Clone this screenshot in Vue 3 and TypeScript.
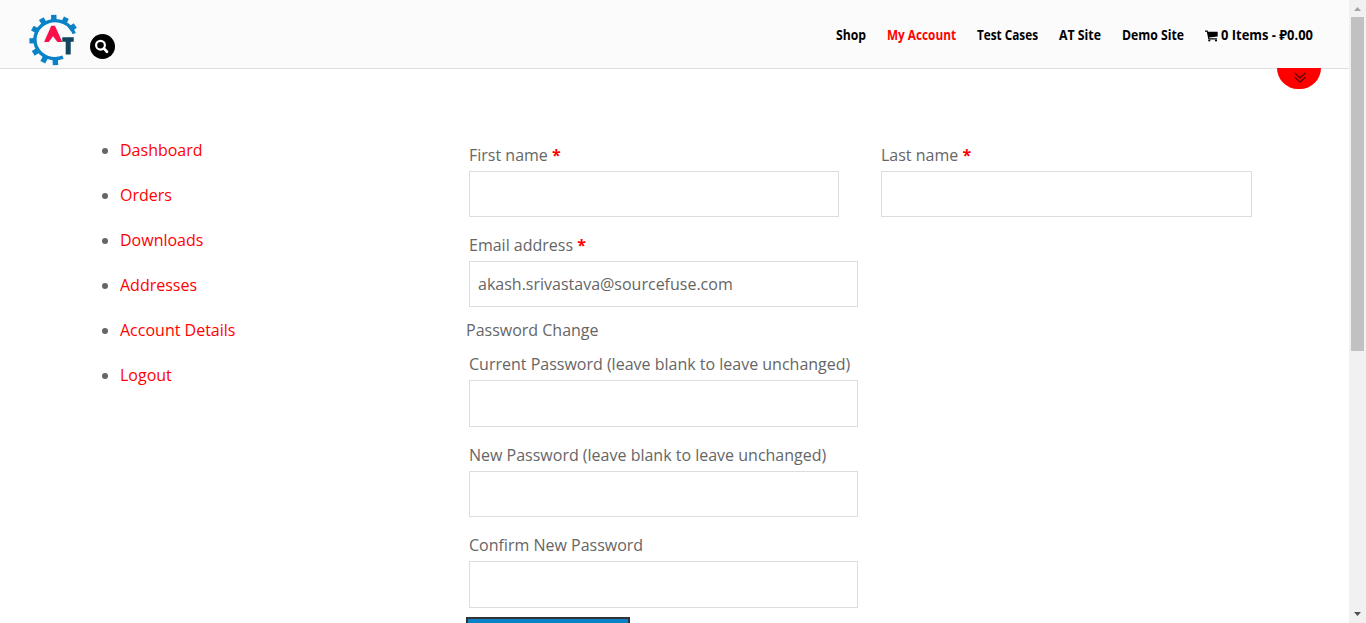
<script setup lang="ts">
interface NavItem { label: string; width: number; active?: boolean }

const nav: NavItem[] = [
  { label: 'Shop', width: 30 },
  { label: 'My Account', width: 69, active: true },
  { label: 'Test Cases', width: 61 },
  { label: 'AT Site', width: 42 },
  { label: 'Demo Site', width: 62 },
]
const links: string[] = ['Dashboard', 'Orders', 'Downloads', 'Addresses', 'Account Details', 'Logout']
const teeth: number[] = [88, 118, 148, 178, 208, 238, 268, 298, 325]
</script>

<template>
  <div class="window">
    <div class="page">
      <header class="header">
        <svg class="logo" width="50" height="50" viewBox="0 0 50 50">
          <g fill="none" stroke="#0a82c8">
            <path d="M45.2 18.6A20.2 19 0 1 0 34 42.2" stroke-width="3.4" />
            <path
              v-for="angle in teeth"
              :key="angle"
              d="M44 25H50.8"
              stroke-width="5.4"
              :transform="`rotate(${angle} 25.6 25)`"
            />
          </g>
          <path d="M22.3 10.7h3.6L33.3 27h-4.8L24 21.2 19.8 27h-4.7z" fill="#fa0f4b" />
          <path d="M33.3 22.3h11.4v4.4h-3v12.8h-5V26.7h-3.4z" fill="#10475e" />
        </svg>
        <button class="search" type="button" aria-label="Search">
          <svg width="25" height="25" viewBox="0 0 25 25" fill="none" stroke="#fff">
            <circle cx="10.5" cy="11.2" r="4.4" stroke-width="2.2" />
            <path d="M13.8 14.4l3.2 3.3" stroke-width="2.8" stroke-linecap="round" />
          </svg>
        </button>
        <nav class="nav">
          <a v-for="item in nav" :key="item.label" :class="{ active: item.active }">
            <svg :width="item.width" height="20">
              <text x="0" y="15" :textLength="item.width" lengthAdjust="spacingAndGlyphs">{{ item.label }}</text>
            </svg>
          </a>
          <a class="cart">
            <svg width="13" height="12" viewBox="0 0 13 12">
              <path d="M0 .6h2.6l.4 1.2h9.7v4.8L4.1 7.6l.2.7H12v1.1H3.4L1.8 1.7H0z" />
              <circle cx="4.3" cy="10.5" r="1.1" />
              <circle cx="11" cy="10.5" r="1.1" />
            </svg>
            <svg width="92" height="20">
              <text x="0" y="15" textLength="92" lengthAdjust="spacingAndGlyphs">0 Items - ₽0.00</text>
            </svg>
          </a>
        </nav>
        <div class="toggle">
          <svg width="12" height="12" viewBox="0 0 12 12" fill="none" stroke="#500000" stroke-width="1.2">
            <path d="M.7 1L6 6l5.3-5M.7 5.2L6 10.2l5.3-5" />
          </svg>
        </div>
      </header>

      <main class="content">
        <ul class="links">
          <li v-for="link in links" :key="link"><a>{{ link }}</a></li>
        </ul>
        <form class="form" @submit.prevent>
          <div class="names">
            <label class="field first">First name <b>*</b><input type="text" /></label>
            <label class="field last">Last name <b>*</b><input type="text" /></label>
          </div>
          <label class="field email">Email address <b>*</b><input type="email" value="akash.srivastava@sourcefuse.com" /></label>
          <div class="legend">Password Change</div>
          <label class="field current tall">Current Password (leave blank to leave unchanged)<input type="password" /></label>
          <label class="field new">New Password (leave blank to leave unchanged)<input type="password" /></label>
          <label class="field confirm tall">Confirm New Password<input type="password" /></label>
          <button class="save" type="submit" aria-label="Save"></button>
        </form>
      </main>
    </div>
    <aside class="scrollbar">
      <svg width="17" height="17"><path d="M5 11h7L8.5 7z" fill="#a3a3a3" /></svg>
      <div class="thumb"></div>
      <svg class="down" width="17" height="17"><path d="M5 6h7l-3.5 4z" fill="#505050" /></svg>
    </aside>
  </div>
</template>

<style>
html, body { overflow: hidden; }
</style>

<style scoped>
* { box-sizing: border-box; }
.window {
  display: flex;
  width: 1366px;
  height: 623px;
  overflow: hidden;
  background: #fff;
  color: #666;
  font: 16px/24px "Open Sans", "Noto Sans", sans-serif;
}
.page { width: 1349px; height: 623px; overflow: hidden; }
.header {
  position: relative;
  display: flex;
  height: 69px;
  padding-left: 29px;
  background: #fbfbfb;
  border-bottom: 1px solid #dfdfdf;
}
.logo { margin-top: 15px; overflow: visible; }
.search {
  width: 25px;
  height: 25px;
  margin: 34px 0 0 11px;
  padding: 0;
  border: 0;
  border-radius: 50%;
  background: #000;
}
.search svg, .nav svg, .scrollbar svg { display: block; }
.nav {
  display: flex;
  gap: 21px;
  margin: 25px 36px 0 auto;
  height: 20px;
  color: #000;
  font: 700 13.5px/20px "Open Sans", "Noto Sans", sans-serif;
}
.nav svg { fill: currentColor; overflow: visible; }
.nav .active { color: #f00; }
.cart { display: flex; gap: 3px; }
.cart svg:first-child { margin-top: 5px; }
.toggle {
  position: absolute;
  left: 1277px;
  top: 68px;
  width: 44px;
  height: 21px;
  border-radius: 0 0 22px 22px;
  background: #f00;
}
.toggle svg { display: block; margin: 4px 0 0 16.5px; }
.content { display: flex; }
.links { width: 366px; margin: 69px 0 0 100px; padding: 0; list-style: none; }
.links li { display: flex; align-items: center; height: 24px; margin-bottom: 21px; color: #f00; }
.links li::before {
  content: "";
  width: 6px;
  height: 6px;
  margin: 2px 12px 0 2px;
  border-radius: 50%;
  background: #666;
}
.form { width: 786px; padding-top: 74px; }
.names { display: flex; justify-content: space-between; height: 74px; }
.field { display: block; width: 389px; height: 74px; margin-left: 3px; }
.names .first { width: 370px; }
.names .last { width: 371px; margin-left: 0; }
.field b { color: #f00; }
.field input {
  display: block;
  width: 100%;
  height: 46px;
  margin: 4px 0 0;
  padding: 0 8px;
  border: 1px solid #ddd;
  border-radius: 0;
  outline: 0;
  background: #fff;
  color: #666;
  font: inherit;
}
.field.tall input { height: 47px; }
.field.tall { height: 75px; }
.email { margin-top: 16px; }
.legend { margin: 11px 0 10px; }
.new { margin-top: 16px; }
.confirm { margin-top: 16px; }
.save {
  display: block;
  width: 164px;
  height: 45px;
  margin-top: 9px;
  border: 2px solid #333;
  background: #0a82c8;
}
.scrollbar {
  display: flex;
  flex-direction: column;
  width: 17px;
  height: 623px;
  background: #f1f1f1;
}
.thumb { width: 13px; height: 334px; margin-left: 2px; background: #c1c1c1; }
.down { margin-top: auto; }
</style>
